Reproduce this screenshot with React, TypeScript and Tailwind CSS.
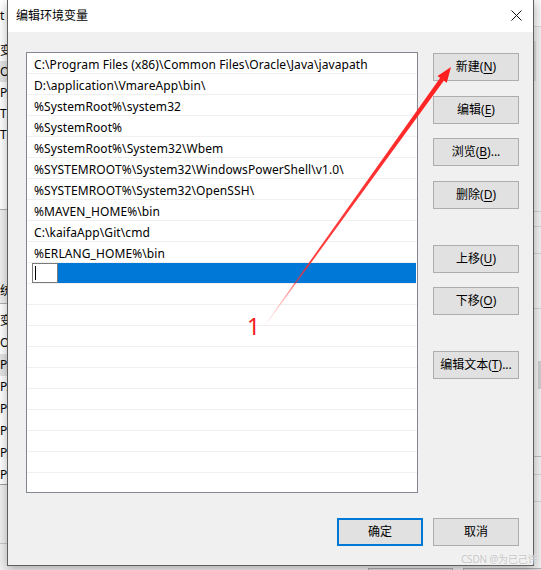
import React from "react";

const paths = [
  "C:\\Program Files (x86)\\Common Files\\Oracle\\Java\\javapath",
  "D:\\application\\VmareApp\\bin\\",
  "%SystemRoot%\\system32",
  "%SystemRoot%",
  "%SystemRoot%\\System32\\Wbem",
  "%SYSTEMROOT%\\System32\\WindowsPowerShell\\v1.0\\",
  "%SYSTEMROOT%\\System32\\OpenSSH\\",
  "%MAVEN_HOME%\\bin",
  "C:\\kaifaApp\\Git\\cmd",
  "%ERLANG_HOME%\\bin",
];

type BtnProps = {
  label: string;
  hot?: string;
  suffix?: string;
  primary?: boolean;
  className?: string;
};

function Btn({ label, hot, suffix = "", primary = false, className = "" }: BtnProps) {
  return (
    <button
      className={`h-[28px] w-[86px] shrink-0 bg-[#e1e1e1] flex items-center justify-center text-[12px] leading-none text-black ${
        primary ? "border-2 border-[#0078d7]" : "border border-[#adadad]"
      } ${className}`}
    >
      {label}
      {hot && (
        <>
          (<span className="underline underline-offset-2">{hot}</span>)
        </>
      )}
      {suffix}
    </button>
  );
}

// the window behind the dialog, only its left edge shows
function BackLeft() {
  const topRows = [
    { t: "变量" },
    { t: "On", sel: true },
    { t: "Pa" },
    { t: "TE" },
    { t: "TM" },
  ];
  const sysRows = [
    { t: "变量" },
    { t: "OS" },
    { t: "Pa", sel: true },
    { t: "PA" },
    { t: "PH" },
    { t: "PR" },
    { t: "PR" },
    { t: "PR" },
  ];
  return (
    <div className="absolute left-0 top-0 w-[40px] h-full flex flex-col bg-[#f0f0f0] text-[12px]">
      <div className="h-[32px] shrink-0 bg-white flex items-center whitespace-nowrap">
        t <span className="text-[#1a5fb4] ml-[2px]">[</span>
      </div>
      <div className="h-[178px] shrink-0 bg-white border-b border-[#b0b0b0] pt-[8px]">
        {topRows.map((r, i) => (
          <div
            key={i}
            className={`h-[21px] flex items-center whitespace-nowrap ${r.sel ? "bg-[#e5e5e5]" : ""}`}
          >
            {r.t}
          </div>
        ))}
      </div>
      <div className="h-[94px] shrink-0 flex items-end pb-[2px] border-b border-[#b0b0b0]">
        <div className="h-[21px] flex items-center whitespace-nowrap">统</div>
      </div>
      <div className="h-[181px] shrink-0 bg-white border-b border-[#a0a0a0] pt-[6px]">
        {sysRows.map((r, i) => (
          <div
            key={i}
            className={`h-[22px] flex items-center whitespace-nowrap ${r.sel ? "bg-[#e5e5e5]" : ""}`}
          >
            {r.t}
          </div>
        ))}
      </div>
      <div className="h-[59px] shrink-0 border-b border-[#c8c8c8]" />
    </div>
  );
}

// the window behind the dialog, right edge
function BackRight() {
  return (
    <div className="absolute right-0 top-0 w-[8px] h-full overflow-hidden flex flex-col bg-[#f0f0f0]">
      <div className="h-[27px] shrink-0 border-b border-[#d8d8d8] bg-[#f7f7f7]" />
      <div className="h-[14px] shrink-0" />
      <div className="h-[40px] shrink-0 w-[2px] ml-[1px] bg-[#dcdcdc]" />
      <div className="h-[130px] shrink-0" />
      <div className="h-[16px] shrink-0 border-t border-[#8c8c8c] border-b border-[#d0d0d0]" />
      <div className="h-[27px] shrink-0 border-b border-[#d0d0d0]" />
      <div className="h-[55px] shrink-0 border-b border-[#d0d0d0]" />
      <div className="h-[80px] shrink-0 flex justify-end">
        <div className="w-[3px] h-[28px] mt-[52px] bg-[#cdcdcd]" />
      </div>
      <div className="h-[68px] shrink-0 border-b border-[#bdbdbd]" />
      <div className="h-[18px] shrink-0 border-b border-[#d0d0d0]" />
      <div className="h-[27px] shrink-0 border-b border-[#d0d0d0]" />
    </div>
  );
}

function Arrow() {
  // tapered red stroke from the "1" label up to the 新建 button
  return (
    <svg
      className="absolute inset-0 pointer-events-none"
      width={541}
      height={570}
      viewBox="0 0 541 570"
    >
      <defs>
        <linearGradient id="fade" x1="263" y1="328" x2="450" y2="68" gradientUnits="userSpaceOnUse">
          <stop offset="0" stopColor="#ff3b3b" stopOpacity="0" />
          <stop offset="0.25" stopColor="#ff2a2a" stopOpacity="0.9" />
          <stop offset="1" stopColor="#ff1f1f" stopOpacity="1" />
        </linearGradient>
      </defs>
      <polygon
        points="263.3,328.3 262.7,327.7 440.4,77.6 444.0,80.4"
        fill="url(#fade)"
      />
      <polygon points="451,67 446.8,82.8 437.5,76" fill="#ff1f1f" />
    </svg>
  );
}

export default function App() {
  return (
    <div className="relative w-[541px] h-[570px] overflow-hidden bg-[#f0f0f0] text-black font-['Noto_Sans','Noto_Sans_CJK_SC',sans-serif]">
      <BackLeft />
      <BackRight />

      {/* bottom buttons of the window behind */}
      <div className="absolute left-[368px] top-[568px] w-[85px] h-[10px] border border-[#adadad] bg-[#e1e1e1]" />
      <div className="absolute left-[463px] top-[568px] w-[85px] h-[10px] border border-[#adadad] bg-[#e1e1e1]" />

      {/* dialog window */}
      <div className="absolute left-[7px] top-0 w-[527px] h-[566px] flex flex-col border-x border-b border-[#5f5f5f] bg-[#f0f0f0] shadow-[0_3px_10px_rgba(0,0,0,0.3)]">
        <div className="h-[32px] shrink-0 bg-white flex items-center justify-between pl-[8px] pr-[11px]">
          <span className="text-[12px]">编辑环境变量</span>
          <svg width="11" height="11" viewBox="0 0 11 11" className="mt-[-1px]">
            <path d="M0.5 0.5 L10.5 10.5 M10.5 0.5 L0.5 10.5" stroke="#111" strokeWidth="1" />
          </svg>
        </div>

        <div className="flex-1 flex flex-col pt-[20px] pl-[18px] pr-[14px] pb-[19px]">
          <div className="flex gap-[15px]">
            <div className="w-[392px] h-[441px] shrink-0 bg-white border border-[#828790] overflow-hidden text-[12px] tracking-[0.09px]">
              {paths.map((p) => (
                <div
                  key={p}
                  className="h-[21px] flex items-center pl-[7px] pt-[3px] border-b border-[#f0f0f0] whitespace-nowrap"
                >
                  {p}
                </div>
              ))}
              <div className="h-[21px] flex items-stretch border-b border-[#f0f0f0]">
                <div className="w-[5px] bg-white" />
                <div className="w-[26px] border border-[#7a7a7a] bg-white flex items-center pl-[2px]">
                  <div className="w-[1px] h-[14px] bg-black" />
                </div>
                <div className="flex-1 bg-[#0078d7] mr-[1px]" />
              </div>
              {Array.from({ length: 10 }).map((_, i) => (
                <div key={i} className="h-[21px] border-b border-[#f0f0f0]" />
              ))}
            </div>

            <div className="flex flex-col pt-[1px]">
              <Btn label="新建" hot="N" />
              <Btn label="编辑" hot="E" className="mt-[15px]" />
              <Btn label="浏览" hot="B" suffix="..." className="mt-[14px]" />
              <Btn label="删除" hot="D" className="mt-[15px]" />
              <Btn label="上移" hot="U" className="mt-[36px]" />
              <Btn label="下移" hot="O" className="mt-[14px]" />
              <Btn label="编辑文本" hot="T" suffix="..." className="mt-[36px]" />
            </div>
          </div>

          <div className="mt-[25px] flex justify-end gap-[10px]">
            <Btn label="确定" primary />
            <Btn label="取消" />
          </div>
        </div>
      </div>

      <Arrow />
      <span className="absolute left-[247px] top-[315px] text-[23px] font-normal leading-none text-[#f51c1c]">
        1
      </span>

      <span className="absolute left-[461px] top-[552px] text-[10px] text-[#c6c6c6] tracking-[-0.2px] whitespace-nowrap [text-shadow:0_0_2px_#fff]">
        CSDN @为已己许
      </span>
    </div>
  );
}
